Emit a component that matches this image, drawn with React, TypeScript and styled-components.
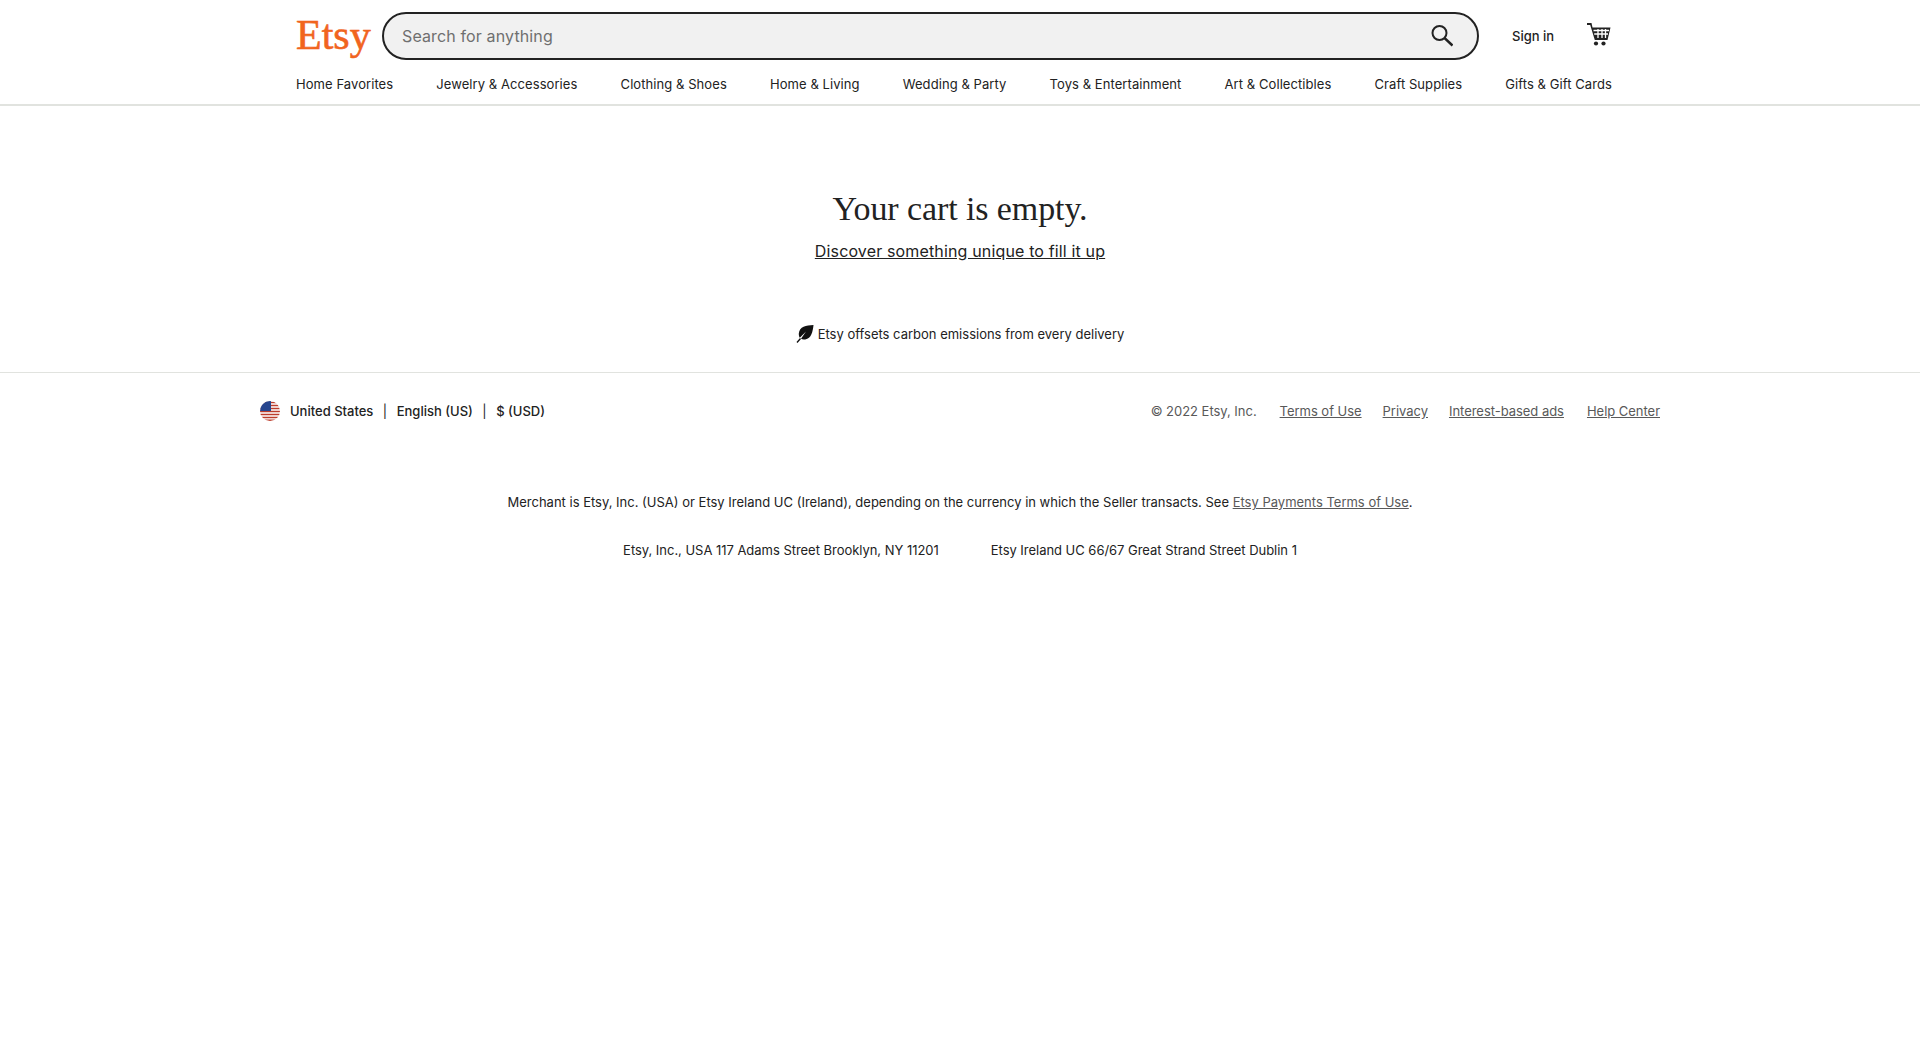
import styled, { createGlobalStyle } from 'styled-components';

const GlobalStyle = createGlobalStyle`
  html, body {
    margin: 0;
    padding: 0;
    background: #fff;
    font-family: Inter, "Liberation Sans", sans-serif;
    color: #222;
  }
  a {
    color: inherit;
  }
`;

const Header = styled.header`
  height: 106px;
  padding: 12px 308px 0 296px;
  box-sizing: border-box;
  border-bottom: 2px solid #e1e3df;
`;

const TopRow = styled.div`
  display: flex;
  align-items: center;
  height: 48px;
`;

const Logo = styled.a`
  width: 86px;
  flex: none;
  margin-bottom: 3px;
  font-family: "Liberation Serif", serif;
  font-size: 42px;
  line-height: 48px;
  -webkit-text-stroke: 0.6px #f1641e;
  color: #f1641e;
  text-decoration: none;
`;

const SearchBar = styled.div`
  width: 1097px;
  height: 48px;
  box-sizing: border-box;
  flex: none;
  display: flex;
  align-items: center;
  justify-content: space-between;
  padding: 0 24px 0 18px;
  background: #f1f1f1;
  border: 2px solid #222;
  border-radius: 24px;
`;

const SearchInput = styled.input`
  flex: 1;
  border: 0;
  outline: 0;
  background: transparent;
  padding: 0;
  font-family: Inter, sans-serif;
  font-size: 16px;
  letter-spacing: 0.13px;
  color: #222;

  &::placeholder {
    color: #6f6f6f;
    opacity: 1;
  }
`;

const SignIn = styled.a`
  margin-left: 33px;
  font-size: 13px;
  font-weight: 500;
  color: #222;
  text-decoration: none;
`;

const CartIcon = styled.svg`
  margin: 0 0 2px 33px;
  width: 24px;
  height: 24px;
  flex: none;
`;

const Nav = styled.nav`
  display: flex;
  justify-content: space-between;
  margin-top: 13px;
  height: 22px;
  align-items: center;
`;

const NavItem = styled.a`
  font-size: 13px;
  letter-spacing: 0.07px;
  color: #222;
  text-decoration: none;
`;

const Main = styled.main`
  display: flex;
  flex-direction: column;
  align-items: center;
  padding-top: 79px;
  height: 267px;
  box-sizing: border-box;
  border-bottom: 1px solid #e1e3df;
`;

const Title = styled.h1`
  margin: 0;
  font-family: "Liberation Serif", serif;
  font-size: 34px;
  line-height: 48px;
  font-weight: 400;
  letter-spacing: -0.1px;
  color: #222;
`;

const DiscoverLink = styled.a`
  margin-top: 6px;
  font-size: 16px;
  line-height: 24px;
  letter-spacing: 0.15px;
  text-decoration: underline;
`;

const Offset = styled.div`
  margin-top: 62px;
  display: flex;
  align-items: center;
  gap: 4px;
  font-size: 13px;
  line-height: 18px;
`;

const Footer = styled.footer`
  width: 1400px;
  margin: 0 auto;
`;

const FooterRow = styled.div`
  display: flex;
  justify-content: space-between;
  align-items: center;
  height: 76px;
  font-size: 13px;
`;

const Locale = styled.div`
  display: flex;
  align-items: center;
  font-weight: 500;
  color: #222;
`;

const Flag = styled.svg`
  width: 20px;
  height: 20px;
  margin-right: 10px;
`;

const Pipe = styled.span`
  margin: 0 9.5px;
  font-weight: 400;
`;

const Legal = styled.div`
  display: flex;
  align-items: center;
  letter-spacing: -0.03px;
  color: #595959;
`;

const LegalLink = styled.a`
  margin-left: 21px;
  text-decoration: underline;

  &:first-of-type {
    margin-left: 23px;
  }

  &:last-of-type {
    margin-left: 23px;
  }
`;

const Merchant = styled.p`
  margin: 33px 0 0;
  text-align: center;
  font-size: 13px;
  line-height: 40px;
`;

const MutedLink = styled.a`
  color: #595959;
  text-decoration: underline;
`;

const Addresses = styled.div`
  display: flex;
  justify-content: center;
  gap: 52px;
  margin-top: 8px;
  font-size: 13px;
  letter-spacing: -0.03px;
  line-height: 40px;
`;

const navItems = [
  'Home Favorites',
  'Jewelry & Accessories',
  'Clothing & Shoes',
  'Home & Living',
  'Wedding & Party',
  'Toys & Entertainment',
  'Art & Collectibles',
  'Craft Supplies',
  'Gifts & Gift Cards',
];

const App = () => {
  return (
    <>
      <GlobalStyle />
      <Header>
        <TopRow>
          <Logo href="#">Etsy</Logo>
          <SearchBar>
            <SearchInput placeholder="Search for anything" />
            <svg width="24" height="24" viewBox="0 0 24 24" fill="none" stroke="#222">
              <circle cx="10.5" cy="9" r="7" strokeWidth="2" />
              <path d="M15.5 14 L23.5 21.500" strokeWidth="2.4" />
            </svg>
          </SearchBar>
          <SignIn href="#">Sign in</SignIn>
          <CartIcon viewBox="0 0 24 24" fill="#222">
            <path d="M0 0h4.500l1 4.500H23.500L20.500 17H7.800L3.200 2H0z" />
            <path
              d="M6.500 7.500h15.500M7.200 11h13.800M11 6v9M15 6v9M18.500 6v9"
              stroke="#fff"
              strokeWidth="1.300"
              fill="none"
            />
            <circle cx="9" cy="20.500" r="2.100" />
            <circle cx="16.500" cy="20.500" r="2.100" />
          </CartIcon>
        </TopRow>
        <Nav>
          {navItems.map((item) => (
            <NavItem key={item} href="#">
              {item}
            </NavItem>
          ))}
        </Nav>
      </Header>
      <Main>
        <Title>Your cart is empty.</Title>
        <DiscoverLink href="#">Discover something unique to fill it up</DiscoverLink>
        <Offset>
          <svg width="18" height="18" viewBox="0 0 18 18" fill="#111">
            <path d="M17.500 0C10 .5 3.500 1.500 2.800 8.500c-.1 1.700.3 3.200 1 4.300L10 6.500 5 13.800c1.200.7 2.700.9 4.200.6C15.500 13.500 16.800 6.500 17.500 0z" />
            <path d="M.5 17l3.500-4 1 1-3.500 4z" />
          </svg>
          Etsy offsets carbon emissions from every delivery
        </Offset>
      </Main>
      <Footer>
        <FooterRow>
          <Locale>
            <Flag viewBox="0 0 20 20">
              <defs>
                <clipPath id="flag-clip">
                  <circle cx="10" cy="10" r="10" />
                </clipPath>
              </defs>
              <g clipPath="url(#flag-clip)">
                <rect width="20" height="20" fill="#fff" />
                <path
                  d="M0 1.500h20M0 4.500h20M0 7.500h20M0 10.500h20M0 13.500h20M0 16.500h20M0 19.300h20"
                  stroke="#bc3d2c"
                  strokeWidth="1.600"
                />
                <rect width="11" height="10" fill="#27468f" />
              </g>
            </Flag>
            United States
            <Pipe>|</Pipe>
            English (US)
            <Pipe>|</Pipe>$ (USD)
          </Locale>
          <Legal>
            © 2022 Etsy, Inc.
            <LegalLink href="#">Terms of Use</LegalLink>
            <LegalLink href="#">Privacy</LegalLink>
            <LegalLink href="#">Interest-based ads</LegalLink>
            <LegalLink href="#">Help Center</LegalLink>
          </Legal>
        </FooterRow>
        <Merchant>
          Merchant is Etsy, Inc. (USA) or Etsy Ireland UC (Ireland), depending on the currency in which the
          Seller transacts. See <MutedLink href="#">Etsy Payments Terms of Use</MutedLink>.
        </Merchant>
        <Addresses>
          <span>Etsy, Inc., USA 117 Adams Street Brooklyn, NY 11201</span>
          <span>Etsy Ireland UC 66/67 Great Strand Street Dublin 1</span>
        </Addresses>
      </Footer>
    </>
  );
};

export default App;
